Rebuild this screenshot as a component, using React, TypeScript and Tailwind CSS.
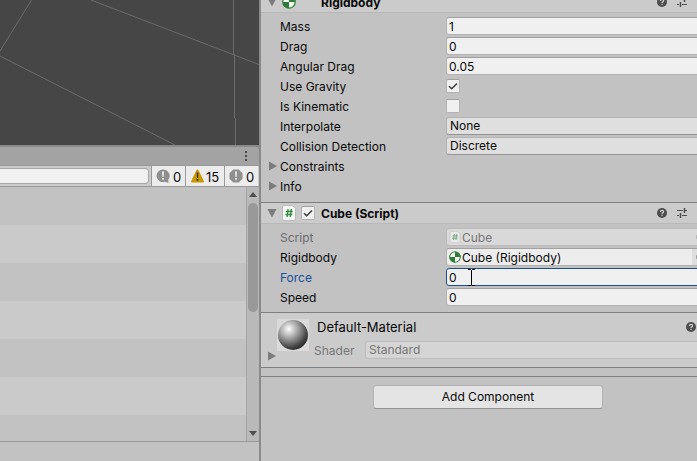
import React, { useState } from "react";

const FIELD =
  "h-[18px] min-w-0 flex-1 rounded-[3px] border bg-[#f0f0f0] px-[2px] pt-px text-[12px] leading-4 text-[#090909] outline-none";
const FIELD_IDLE = "border-[#b2b2b2] border-t-[#a0a0a0] focus:border-[#1a5091]";
const FIELD_ACTIVE = "border-[#1a5091]";

function Foldout({ open }: { open?: boolean }) {
  return (
    <svg width="10" height="10" viewBox="0 0 10 10" fill="#7c7c7c" className="shrink-0">
      {open ? <path d="M0.5 1h9L5 9.5z" /> : <path d="M1 0.500v9L9 5z" />}
    </svg>
  );
}

function BodyIcon({ size }: { size: number }) {
  return (
    <svg width={size} height={size} viewBox="0 0 14 14" className="shrink-0">
      <circle cx="7" cy="7" r="6.2" fill="#f4f8f4" stroke="#2f7d37" strokeWidth="1.2" />
      <path d="M7 7V0.8A6.2 6.2 0 0 1 13.2 7zM7 7v6.2A6.2 6.2 0 0 1 0.8 7z" fill="#2f7d37" />
    </svg>
  );
}

function ScriptIcon({ size }: { size: number }) {
  return (
    <svg width={size} height={size} viewBox="0 0 14 16" className="shrink-0">
      <path d="M1.800.5h8.700l3 3v10.500q0 1.500-1.500 1.500H2q-1.500 0-1.500-1.500V2q0-1.500 1.300-1.500z" fill="#f6f6f6" stroke="#b0b0b0" strokeWidth="0.8" />
      <path d="M6.100 4l-1 8M9.300 4l-1 8M3.800 6.500h6.900M3.400 9.500h6.900" stroke="#2f8a3a" strokeWidth="1.300" fill="none" />
    </svg>
  );
}

function HelpIcon() {
  return (
    <svg width="10" height="10" viewBox="0 0 10 10" className="block">
      <circle cx="5" cy="5" r="5" fill="#4d4d4d" />
      <path d="M3.400 3.900q0-1.500 1.600-1.500t1.600 1.300q0 .8-.8 1.200t-.8 1" stroke="#d0d0d0" strokeWidth="1.200" fill="none" />
      <rect x="4.400" y="6.800" width="1.200" height="1.200" fill="#d0d0d0" />
    </svg>
  );
}

function SlidersIcon() {
  return (
    <svg width="10" height="10" viewBox="0 0 10 10" className="block" stroke="#4d4d4d" fill="none">
      <path d="M0 2.500h6M8 2.500h2M0 7.500h2M5 7.500h5" />
      <path d="M7.500 0v5M3.500 5v5" strokeWidth="1.500" />
    </svg>
  );
}

function Check({ label, id, initial = false }: { label?: string; id?: string; initial?: boolean }) {
  const [on, setOn] = useState(initial);
  return (
    <span className="relative block h-[14px] w-[14px] shrink-0">
      <input
        type="checkbox"
        id={id}
        aria-label={label}
        checked={on}
        onChange={(e) => setOn(e.target.checked)}
        className="block h-[14px] w-[14px] appearance-none rounded-[2px] border border-[#b2b2b2] border-t-[#a0a0a0] bg-[#f0f0f0]"
      />
      {on && (
        <svg viewBox="0 0 14 14" className="pointer-events-none absolute inset-0" fill="none" stroke="#3c3c3c" strokeWidth="1.500">
          <path d="M3 7.200l2.700 2.500L11 4.500" />
        </svg>
      )}
    </span>
  );
}

function Row({ label, id, tone = "text-[#090909]", children }: { label: string; id: string; tone?: string; children: React.ReactNode }) {
  return (
    <div className="flex h-[18px] items-center pl-[19px]">
      <label htmlFor={id} className={`w-[166px] shrink-0 pt-[2px] text-[12px] leading-4 ${tone}`}>
        {label}
      </label>
      {children}
    </div>
  );
}

function TextRow({ label, id, value }: { label: string; id: string; value: string }) {
  return (
    <Row label={label} id={id}>
      <input id={id} defaultValue={value} className={`${FIELD} ${FIELD_IDLE}`} />
    </Row>
  );
}

function SelectRow({ label, id, options }: { label: string; id: string; options: string[] }) {
  return (
    <Row label={label} id={id}>
      <select
        id={id}
        className="h-[18px] min-w-0 flex-1 appearance-none rounded-[3px] border border-[#b2b2b2] border-b-[#939393] bg-[#dfdfdf] px-[3px] text-[12px] leading-4 text-[#090909]"
      >
        {options.map((o) => (
          <option key={o}>{o}</option>
        ))}
      </select>
    </Row>
  );
}

function FoldRow({ label }: { label: string }) {
  return (
    <button className="flex h-[18px] items-center gap-[2px] pl-[7px] text-left text-[12px] leading-4 text-[#090909]">
      <Foldout />
      <span className="pt-[2px]">{label}</span>
    </button>
  );
}

function ObjectRow({ label, id, value, icon, disabled }: { label: string; id: string; value: string; icon: React.ReactNode; disabled?: boolean }) {
  return (
    <Row label={label} id={id} tone={disabled ? "text-[#6c6c6c]" : "text-[#090909]"}>
      <div
        className={`flex h-[18px] min-w-0 flex-1 items-center overflow-hidden rounded-[3px] border pl-px ${
          disabled ? "border-[#bbbbbb] bg-[#d9d9d9]" : "border-[#b2b2b2] border-t-[#a0a0a0] bg-[#ededed]"
        }`}
      >
        <span className={`flex w-[14px] justify-center ${disabled ? "opacity-60" : ""}`}>{icon}</span>
        <input
          id={id}
          readOnly
          disabled={disabled}
          defaultValue={value}
          className={`min-w-0 flex-1 bg-transparent pt-px text-[12px] leading-4 outline-none ${disabled ? "text-[#777777]" : "text-[#090909]"}`}
        />
        <button aria-label={`Select ${label}`} disabled={disabled} className={`flex h-4 w-[18px] items-center justify-center ${disabled ? "" : "bg-[#dedede]"}`}>
          <svg width="10" height="10" viewBox="0 0 11 11" fill="none" stroke={disabled ? "#8c8c8c" : "#555555"}>
            <circle cx="5.500" cy="5.500" r="4.500" />
            <circle cx="5.500" cy="5.500" r="1.500" fill="#555555" />
          </svg>
        </button>
      </div>
    </Row>
  );
}

function Header({ title, icon, toggle }: { title: string; icon: React.ReactNode; toggle?: boolean }) {
  return (
    <div className="flex h-[21px] items-center border-b border-[#b8b8b8] bg-[#cbcbcb] pl-[6px] pr-[28px]">
      <Foldout open />
      <span className="ml-1 flex w-4 justify-center">{icon}</span>
      <span className="ml-[4px] w-5">{toggle && <Check label={`Enable ${title}`} initial />}</span>
      <h2 className="flex-1 pt-[2px] text-[12px] font-bold leading-4 text-[#090909]">{title}</h2>
      <button aria-label={`${title} help`} className="mr-[10px]">
        <HelpIcon />
      </button>
      <button aria-label={`${title} presets`}>
        <SlidersIcon />
      </button>
    </div>
  );
}

function Scene() {
  return (
    <div className="h-[145px] shrink-0 overflow-hidden bg-[#464646]">
      <svg width="259" height="145" viewBox="0 0 259 145" stroke="#6b6b6b" fill="none">
        <path d="M0 51L31.500 0M91 0L259 64.500M0 56L175 145M233.500 0V54M234.500 54V118M235.500 118V145" />
      </svg>
    </div>
  );
}

const COUNT =
  "flex h-5 items-center border-l border-[#999999] bg-[#ececec] text-[13px] leading-4 text-[#090909]";

function ConsolePanel() {
  return (
    <section className="flex min-h-0 flex-1 flex-col border-t-2 border-[#8a8a8a] bg-[#8a8a8a]">
      <div className="flex h-[18px] shrink-0 items-center justify-end rounded-tr-[3px] bg-[#a3a3a3] pr-[8px]">
        <button aria-label="Console menu" className="flex h-4 w-[10px] items-center justify-center">
          <svg width="2" height="10" viewBox="0 0 2 10" fill="#4c4c4c">
            <path d="M0 0h2v2H0zM0 4h2v2H0zM0 8h2v2H0z" />
          </svg>
        </button>
      </div>
      <div className="flex h-[22px] shrink-0 items-center border-y border-[#999999] bg-[#cbcbcb] pr-px">
        <input
          type="search"
          aria-label="Search console"
          className="mr-[2px] h-4 min-w-0 flex-1 rounded-r-[4px] border border-l-0 border-[#a8a8a8] bg-[#f0f0f0] px-1 text-[12px] outline-none"
        />
        <button aria-label="Messages" className={`${COUNT} w-[34px] gap-[3px] pl-[4px]`}>
          <svg width="14" height="14" viewBox="0 0 14 14" className="shrink-0">
            <path d="M7 0.500a6.500 6.300 0 1 0 2 12.300L12.500 14l-.3-3.300A6.500 6.300 0 0 0 7 .5z" fill="#8f8f8f" />
            <path d="M6 2.500h2l-.4 5.500h-1.200zM6.100 9h1.800v1.700h-1.800z" fill="#eeeeee" />
          </svg>
          <span className="pt-px">0</span>
        </button>
        <button aria-label="Warnings" className={`${COUNT} w-[39px] gap-[2px] pl-[5px]`}>
          <svg width="13" height="14" viewBox="0 0 13 14" className="shrink-0">
            <path d="M6.500 0.500q.8 0 1.200 1L13 12.500q0 1-1 1H1q-1 0-1-1L5.300 1.500q.4-1 1.200-1z" fill="#c99700" />
            <path d="M5.700 3.500h1.600l-.3 5.500h-1zM5.700 10h1.600v1.700h-1.600z" fill="#2a2a20" />
          </svg>
          <span className="pt-px">15</span>
        </button>
        <button aria-label="Errors" className={`${COUNT} w-[34px] gap-[3px] pl-[4px]`}>
          <svg width="14" height="14" viewBox="0 0 14 14" className="shrink-0">
            <path d="M4.300.5h5.400l3.800 3.800v5.400l-3.800 3.800H4.300L.5 9.700V4.300z" fill="#8f8f8f" />
            <path d="M6 2.500h2l-.4 5.500h-1.200zM6.100 9h1.800v1.700h-1.800z" fill="#eeeeee" />
          </svg>
          <span className="pt-px">0</span>
        </button>
      </div>
      <div className="flex min-h-0 flex-1 bg-[#c2c2c2]">
        <ul className="min-h-0 flex-1 overflow-hidden">
          {[0, 1, 2, 3, 4, 5, 6].map((i) => (
            <li key={i} className="h-[38px] odd:bg-[#c2c2c2] even:bg-[#cacaca]" />
          ))}
        </ul>
        <div className="flex w-[13px] flex-col items-center border-l border-[#a6a6a6] bg-[#b9b9b9] py-[5px]">
          <svg width="8" height="5" viewBox="0 0 8 5" fill="#4f4f4f">
            <path d="M0 5h8L4 0z" />
          </svg>
          <div className="flex w-full flex-1 flex-col px-px pt-[6px]">
            <div className="h-[109px] rounded-[5px] bg-[#999999]" />
          </div>
          <svg width="8" height="5" viewBox="0 0 8 5" fill="#4f4f4f">
            <path d="M0 0h8L4 5z" />
          </svg>
        </div>
      </div>
      <div className="h-[20px] shrink-0 border-t border-[#999999] bg-[#c2c2c2]" />
    </section>
  );
}

function Material() {
  return (
    <section className="flex h-[56px] border-y border-[#7f7f7f] bg-[#cbcbcb] pl-[6px]">
      <div className="flex flex-col justify-end pb-[6px]">
        <Foldout />
      </div>
      <svg width="32" height="32" viewBox="0 0 32 32" className="mt-[6px] shrink-0">
        <defs>
          <radialGradient id="ball" cx="0.36" cy="0.3" r="0.75">
            <stop offset="0" stopColor="#ffffff" />
            <stop offset="0.15" stopColor="#dcdcdc" />
            <stop offset="0.5" stopColor="#8e8e8e" />
            <stop offset="0.8" stopColor="#484848" />
            <stop offset="1" stopColor="#262626" />
          </radialGradient>
        </defs>
        <rect width="32" height="32" fill="#dadada" />
        <circle cx="16" cy="16" r="15" fill="url(#ball)" />
      </svg>
      <div className="min-w-0 flex-1 pl-[5px] pt-[5px]">
        <div className="flex h-[18px] items-center pl-[3px] pr-[19px]">
          <h2 className="flex-1 text-[13px] leading-[18px] text-[#090909]">Default-Material</h2>
          <button aria-label="Material help">
            <HelpIcon />
          </button>
        </div>
        <div className="mt-[5px] flex h-[18px] items-center text-[#777777]">
          <label htmlFor="shader" className="w-[51px] pt-[2px] text-[12px] leading-4">
            Shader
          </label>
          <select
            id="shader"
            disabled
            className="h-[18px] min-w-0 flex-1 appearance-none rounded-[3px] border border-[#bcbcbc] bg-[#d5d5d5] px-[3px] text-[12px] leading-4 text-[#777777] opacity-100"
          >
            <option>Standard</option>
          </select>
        </div>
      </div>
    </section>
  );
}

function Inspector() {
  return (
    <main className="min-w-0 flex-1 overflow-hidden border-l-2 border-[#8a8a8a] bg-[#c2c2c2]">
      <div className="-mr-[18px] -mt-[8px]">
        <section>
          <Header title="Rigidbody" icon={<BodyIcon size={14} />} />
          <div className="flex flex-col gap-[2px] pb-[7px] pr-[4px] pt-[4px]">
            <TextRow label="Mass" id="mass" value="1" />
            <TextRow label="Drag" id="drag" value="0" />
            <TextRow label="Angular Drag" id="angular" value="0.05" />
            <Row label="Use Gravity" id="gravity">
              <Check id="gravity" initial />
            </Row>
            <Row label="Is Kinematic" id="kinematic">
              <Check id="kinematic" />
            </Row>
            <SelectRow label="Interpolate" id="interpolate" options={["None", "Interpolate", "Extrapolate"]} />
            <SelectRow label="Collision Detection" id="collision" options={["Discrete", "Continuous"]} />
            <FoldRow label="Constraints" />
            <FoldRow label="Info" />
          </div>
        </section>
        <section className="border-t border-[#7f7f7f]">
          <Header title="Cube (Script)" icon={<ScriptIcon size={16} />} toggle />
          <div className="flex flex-col gap-[2px] pb-[6px] pr-[4px] pt-[4px]">
            <ObjectRow label="Script" id="script" value="Cube" icon={<ScriptIcon size={12} />} disabled />
            <ObjectRow label="Rigidbody" id="body" value="Cube (Rigidbody)" icon={<BodyIcon size={12} />} />
            <Row label="Force" id="force" tone="text-[#17509c]">
              <div className="relative flex min-w-0 flex-1">
                <input id="force" defaultValue="0" className={`${FIELD} ${FIELD_ACTIVE}`} />
                <svg width="9" height="17" viewBox="0 0 9 17" className="pointer-events-none absolute left-[21px] top-px" fill="none" stroke="#000000">
                  <path d="M1 .5h2.500l1 1 1-1H8M4.500 1v15M1 16.500h2.500l1-1 1 1H8" />
                </svg>
              </div>
            </Row>
            <TextRow label="Speed" id="speed" value="0" />
          </div>
        </section>
        <Material />
        <div className="mt-[8px] flex justify-center border-t border-[#7f7f7f] pt-[8px]">
          <button className="h-6 w-[230px] rounded-[3px] border border-[#b2b2b2] border-b-[#939393] bg-[#e4e4e4] text-[12px] leading-4 text-[#090909]">
            Add Component
          </button>
        </div>
      </div>
    </main>
  );
}

export default function App() {
  return (
    <div className="flex h-screen overflow-hidden bg-[#c2c2c2] font-['Inter',sans-serif]">
      <div className="flex w-[259px] shrink-0 flex-col">
        <Scene />
        <ConsolePanel />
      </div>
      <Inspector />
    </div>
  );
}
